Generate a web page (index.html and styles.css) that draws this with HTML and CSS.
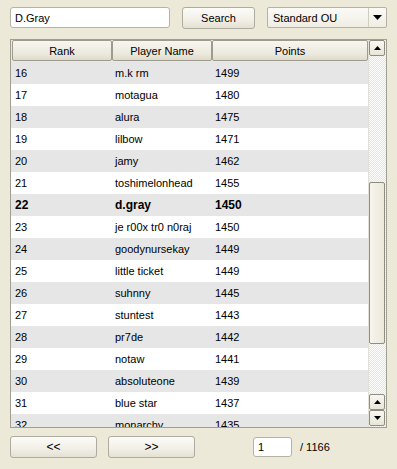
FILE: index.html
```html
<!DOCTYPE html>
<html lang="en">
<head>
    <meta charset="UTF-8">
    <meta name="viewport" content="width=device-width, initial-scale=1.0">
    <title>Ladder</title>
    <link rel="stylesheet" href="styles.css">
</head>
<body>
    <div class="toolbar">
        <input class="search-box" type="text" value="D.Gray">
        <button class="btn search-btn">Search</button>
        <div class="combo">
            <span class="combo-text">Standard OU</span>
            <span class="combo-arrow">
                <svg width="9" height="5" viewBox="0 0 9 5"><polygon points="0,0 9,0 4.5,5" fill="#000"/></svg>
            </span>
        </div>
    </div>

    <div class="ladder">
        <div class="list">
            <div class="header">
                <div class="hcell rank">Rank</div>
                <div class="hcell name">Player Name</div>
                <div class="hcell points">Points</div>
            </div>
            <div class="rows" id="rows"></div>
        </div>
        <div class="scrollbar">
            <div class="sb-btn">
                <svg width="7" height="4" viewBox="0 0 7 4"><polygon points="0,4 7,4 3.5,0" fill="#000"/></svg>
            </div>
            <div class="sb-track">
                <div class="sb-space"></div>
                <div class="sb-thumb">
                    <div class="grip"></div>
                </div>
                <div class="sb-rest"></div>
            </div>
            <div class="sb-btn">
                <svg width="7" height="4" viewBox="0 0 7 4"><polygon points="0,4 7,4 3.5,0" fill="#000"/></svg>
            </div>
            <div class="sb-btn">
                <svg width="7" height="4" viewBox="0 0 7 4"><polygon points="0,0 7,0 3.5,4" fill="#000"/></svg>
            </div>
            <div class="sb-end"></div>
        </div>
    </div>

    <div class="footer">
        <button class="btn page-btn">&lt;&lt;</button>
        <button class="btn page-btn">&gt;&gt;</button>
        <input class="page-box" type="text" value="1">
        <span class="page-total">/ 1166</span>
    </div>

    <script>
        const players = [
            [16, "m.k rm", 1499],
            [17, "motagua", 1480],
            [18, "alura", 1475],
            [19, "lilbow", 1471],
            [20, "jamy", 1462],
            [21, "toshimelonhead", 1455],
            [22, "d.gray", 1450],
            [23, "je r00x tr0 n0raj", 1450],
            [24, "goodynursekay", 1449],
            [25, "little ticket", 1449],
            [26, "suhnny", 1445],
            [27, "stuntest", 1443],
            [28, "pr7de", 1442],
            [29, "notaw", 1441],
            [30, "absoluteone", 1439],
            [31, "blue star", 1437],
            [32, "monarchy", 1435]
        ];

        const rows = document.getElementById("rows");
        players.forEach(p => {
            let row = document.createElement("div");
            row.className = "row";
            if (p[0] % 2 === 0) row.classList.add("alt");
            if (p[1] === "d.gray") row.classList.add("me");
            p.forEach((val, i) => {
                let cell = document.createElement("div");
                cell.className = "cell c" + i;
                cell.textContent = val;
                row.appendChild(cell);
            });
            rows.appendChild(row);
        });
    </script>
</body>
</html>
```

FILE: styles.css
```css
body {
    margin: 0;
    background: #ece9d8;
    font-family: "Liberation Sans", Arial, sans-serif;
    font-size: 11px;
    color: #000;
    width: 397px;
    height: 469px;
    overflow: hidden;
}

.toolbar {
    display: flex;
    align-items: center;
    padding: 7px 0 0 10px;
    height: 21px;
}

.search-box {
    box-sizing: border-box;
    width: 160px;
    height: 21px;
    margin: 0;
    padding: 0 4px;
    border: 1px solid #b5b3a6;
    border-radius: 3px;
    background: #fff;
    font: inherit;
    outline: none;
}

.btn {
    box-sizing: border-box;
    margin: 0;
    padding: 0;
    border: 1px solid #aeac9f;
    border-radius: 3px;
    background: linear-gradient(#fbfbf8, #f1efe6 60%, #e4e1d3);
    font: inherit;
    color: #000;
}

.search-btn {
    width: 73px;
    height: 22px;
    margin-left: 12px;
}

.combo {
    box-sizing: border-box;
    display: flex;
    align-items: center;
    width: 120px;
    height: 21px;
    margin-left: 12px;
    border: 1px solid #b5b3a6;
    border-radius: 2px;
    background: linear-gradient(#fbfaf6, #efede3);
}

.combo-text {
    flex: 1;
    padding-left: 5px;
}

.combo-arrow {
    box-sizing: border-box;
    display: flex;
    align-items: center;
    justify-content: center;
    width: 18px;
    height: 19px;
    border-left: 1px solid #d0cec0;
}

.ladder {
    box-sizing: border-box;
    display: flex;
    width: 377px;
    height: 389px;
    margin: 11px 0 0 10px;
    border: 1px solid #a09e91;
    background: #fff;
}

.list {
    flex: 1;
    display: flex;
    flex-direction: column;
    overflow: hidden;
}

.header {
    display: flex;
    height: 22px;
    padding-left: 1px;
    background: #ece9d8;
}

.hcell {
    box-sizing: border-box;
    display: flex;
    align-items: center;
    justify-content: center;
    height: 21px;
    border: 1px solid #9d9b8e;
    border-radius: 2px;
    background: linear-gradient(#f7f6f0, #ebe9dc 70%, #dedbcb);
}

.rank { width: 100px; }
.name { width: 100px; }
.points { width: 156px; }

.rows {
    flex: 1;
    overflow: hidden;
}

.row {
    display: flex;
    height: 22px;
    align-items: center;
    background: #fff;
}

.row.alt {
    background: #e6e6e6;
}

.row.me {
    font-weight: bold;
    font-size: 12px;
}

.cell {
    box-sizing: border-box;
    padding-left: 4px;
}

.c0 { width: 100px; }
.c1 { width: 100px; }
.c2 { width: 100px; }

.scrollbar {
    display: flex;
    flex-direction: column;
    width: 17px;
    border-left: 1px solid #e4e2d8;
    background: repeating-conic-gradient(#fcfcfa 0 25%, #e8e6dc 0 50%) 0 0 / 2px 2px;
}

.sb-btn {
    box-sizing: border-box;
    display: flex;
    align-items: center;
    justify-content: center;
    width: 16px;
    height: 16px;
    border: 1px solid #8f8d81;
    border-radius: 2px;
    background: linear-gradient(#f8f7f2, #e9e6d8);
}

.sb-track {
    flex: 1;
    display: flex;
    flex-direction: column;
}

.sb-space {
    height: 126px;
}

.sb-thumb {
    box-sizing: border-box;
    display: flex;
    align-items: center;
    justify-content: center;
    width: 16px;
    height: 162px;
    border: 1px solid #8f8d81;
    border-radius: 2px;
    background: linear-gradient(90deg, #f6f4ec, #ece9da);
}

.grip {
    width: 9px;
    height: 10px;
    margin-top: 10px;
    background: radial-gradient(circle, #b3b0a2 40%, transparent 45%) 0 0 / 2px 2px;
}

.sb-rest {
    flex: 1;
}

.sb-end {
    height: 1px;
}

.footer {
    display: flex;
    align-items: center;
    padding: 8px 0 0 10px;
}

.page-btn {
    width: 87px;
    height: 22px;
    margin-right: 11px;
    font-size: 12px;
}

.page-box {
    box-sizing: border-box;
    width: 39px;
    height: 20px;
    margin: 0 0 0 47px;
    padding: 0 4px;
    border: 1px solid #b5b3a6;
    border-radius: 3px;
    background: #fff;
    font: inherit;
    outline: none;
}

.page-total {
    margin-left: 8px;
}
```
